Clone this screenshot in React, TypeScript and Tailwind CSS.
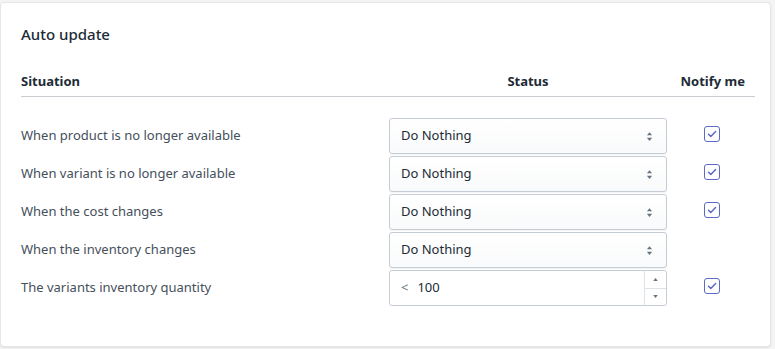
const rows = [
  { label: 'When product is no longer available', kind: 'select', notify: true },
  { label: 'When variant is no longer available', kind: 'select', notify: true },
  { label: 'When the cost changes', kind: 'select', notify: true },
  { label: 'When the inventory changes', kind: 'select', notify: false },
  { label: 'The variants inventory quantity', kind: 'number', notify: true },
]

const Checkbox = () => (
  <span className="flex h-4 w-4 items-center justify-center rounded-[3px] border border-[#5c6ac4] bg-white">
    <svg viewBox="0 0 12 12" className="h-3 w-3" fill="none">
      <path d="M2.5 6.2l2.3 2.3L9.6 3.6" stroke="#5c6ac4" strokeWidth="1.5" strokeLinecap="round" strokeLinejoin="round" />
    </svg>
  </span>
)

const SelectBox = () => (
  <div className="flex h-9 items-center justify-between rounded-[3px] border border-[#c4cdd5] bg-gradient-to-b from-white to-[#f9fafb] pl-[11px] pr-[13px] shadow-[0_1px_0_rgba(22,29,37,0.05)]">
    <span>Do Nothing</span>
    <svg viewBox="0 0 8 12" className="h-[11px] w-[7px]" fill="#637381">
      <path d="M4 1L7 4.5H1z" />
      <path d="M4 11L1 7.5h6z" />
    </svg>
  </div>
)

const NumberBox = () => (
  <div className="flex h-9 items-stretch rounded-[3px] border border-[#c4cdd5] bg-white">
    <div className="flex flex-1 items-center pl-[11px]">
      <span className="mr-[9px] text-[#637381]">&lt;</span>
      <span>100</span>
    </div>
    <div className="flex w-[22px] flex-col border-l border-[#dfe3e8]">
      <div className="flex flex-1 items-center justify-center border-b border-[#dfe3e8]">
        <svg viewBox="0 0 6 4" className="h-[3px] w-[5px]" fill="#637381"><path d="M3 0l3 4H0z" /></svg>
      </div>
      <div className="flex flex-1 items-center justify-center">
        <svg viewBox="0 0 6 4" className="h-[3px] w-[5px]" fill="#637381"><path d="M3 4L0 0h6z" /></svg>
      </div>
    </div>
  </div>
)

const App = () => {
  return (
    <div className="h-[349px] w-[775px] bg-[#f4f4f4] pt-[2px] font-['Noto_Sans',sans-serif] text-[13px] text-[#212b36]">
      <div className="h-[345px] w-[771px] rounded-[4px] border border-[#e6e6e6] bg-white pl-[20px] pr-[15px] pt-[20px] shadow-[0_1px_2px_rgba(0,0,0,0.08)]">
        <h2 className="text-[15px] font-medium leading-[22px]">Auto update</h2>

        <div className="mt-[27px] grid grid-cols-[368px_278px_1fr] border-b border-[#c9ccd0] pb-[6px] font-bold leading-[18px]">
          <span>Situation</span>
          <span className="text-center">Status</span>
          <span className="text-right pr-[10px]">Notify me</span>
        </div>

        <div className="mt-[21px] flex flex-col gap-[2px]">
          {rows.map((r) => (
            <div key={r.label} className="grid grid-cols-[368px_278px_1fr] items-center">
              <span className="text-[#454f5b]">{r.label}</span>
              {r.kind === 'select' ? <SelectBox /> : <NumberBox />}
              <div className="flex justify-center self-start pl-[2px] pt-[8px]">{r.notify && <Checkbox />}</div>
            </div>
          ))}
        </div>
      </div>
    </div>
  )
}

export default App
